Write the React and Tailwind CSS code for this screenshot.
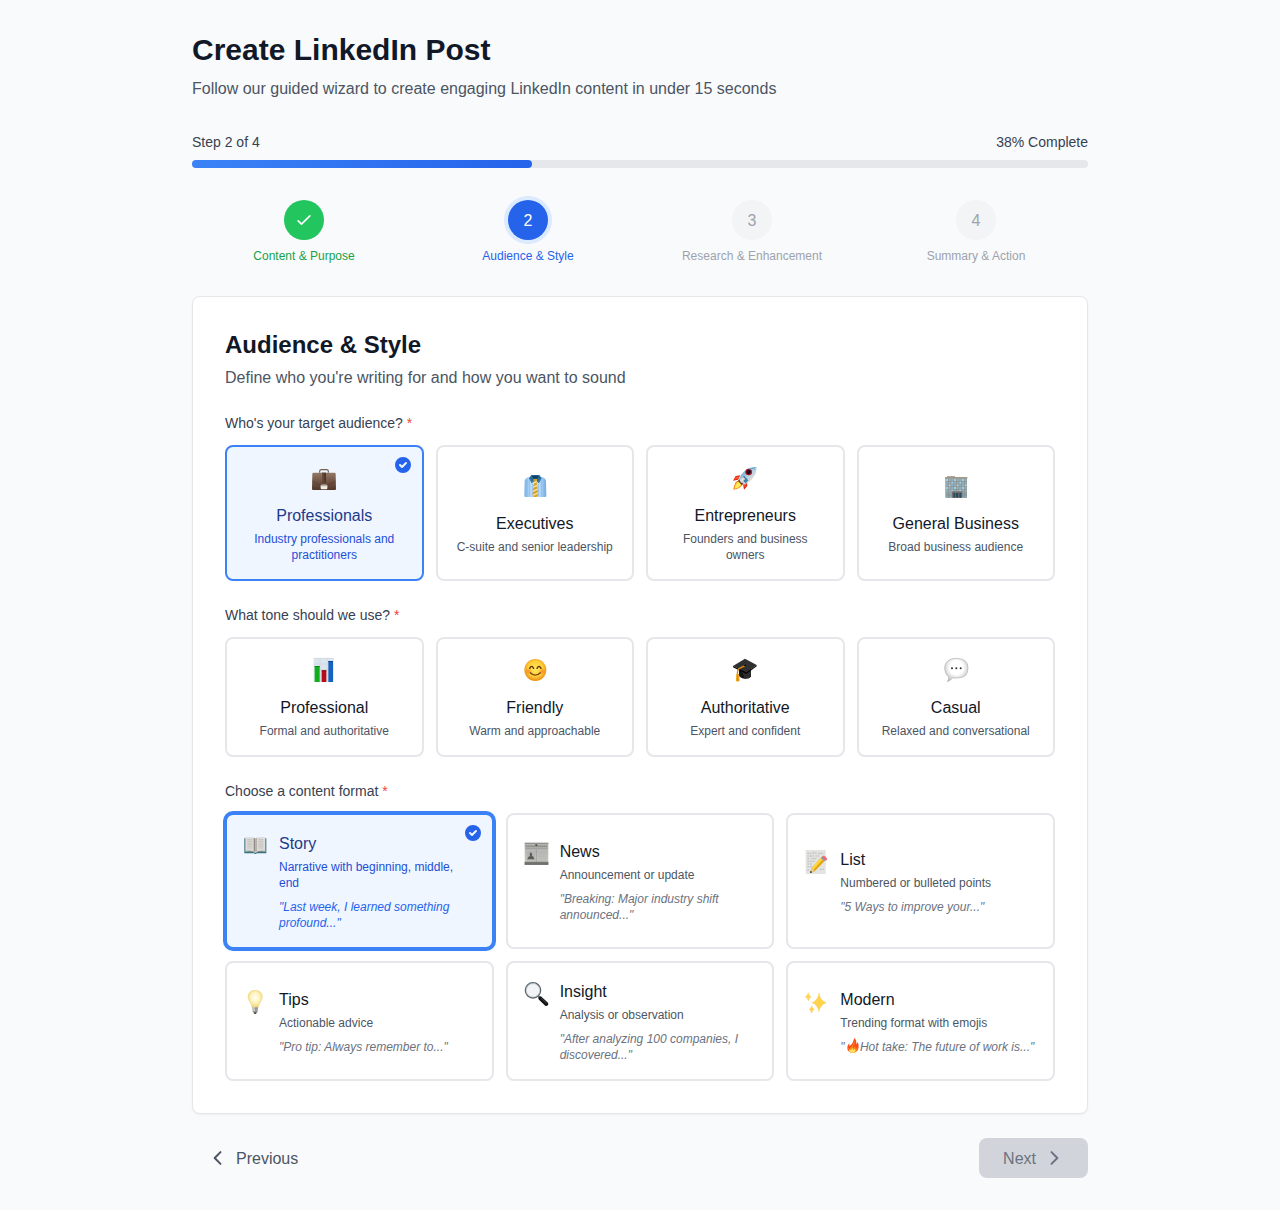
import React from 'react';

function Glyph({ children }) {
  return (
    <svg viewBox="0 0 72 72" className="block h-6 w-6 overflow-visible" aria-hidden="true">
      {children}
    </svg>
  );
}

const Briefcase = () => (
  <Glyph>
    <defs>
      <linearGradient id="bc" x1="0" y1="0" x2="0" y2="1">
        <stop offset="0" stopColor="#94796a" />
        <stop offset=".45" stopColor="#755847" />
        <stop offset="1" stopColor="#523629" />
      </linearGradient>
    </defs>
    <path d="M23 20v-4q0-5 5-5h16q5 0 5 5v4" fill="none" stroke="#75604f" strokeWidth="3.500" />
    <path d="M4 20h64q3 0 3 4l1 45q0 3-3 3H3q-3 0-3-3l1-45q0-4 3-4Z" fill="url(#bc)" />
    <path d="M1 45q17 11 27 12h16q13-2 27-12" fill="none" stroke="#4a3226" strokeWidth="1.500" />
    <path d="M30 20h12v30H30z" fill="#533729" />
    <path d="M31 20h4v28h-4z" fill="#735546" />
    <rect x="26" y="56" width="20" height="14" rx="3" fill="#f1efeb" />
    <path d="M26 61h20v-2q0-3-3-3H29q-3 0-3 3Z" fill="#b8afa4" />
  </Glyph>
);

const Necktie = () => (
  <Glyph>
    <defs>
      <linearGradient id="sh" x1="0" y1="0" x2="1" y2="0">
        <stop offset="0" stopColor="#78b2e4" />
        <stop offset=".3" stopColor="#bddfff" />
        <stop offset=".7" stopColor="#bddfff" />
        <stop offset="1" stopColor="#6eaae0" />
      </linearGradient>
      <clipPath id="tieclip"><path d="M31 14h12l-2 9 5 40-5 6h-8l-5-6 5-40Z" /></clipPath>
    </defs>
    <path d="M21 8Q8 10 5 20L4 66q0 3 4 3h58q4 0 4-3l-1-46Q66 10 53 8Z" fill="url(#sh)" />
    <path d="M12 18v50M20 17v51M28 30v38M47 30v38M55 17v51M63 18v50" stroke="#7fb3e2" strokeWidth="2" />
    <path d="M25 3h24l7 10-8 15-11-9-11 9-8-15Z" fill="#276d9b" />
    <path d="M27 5h20l-4 9H31Z" fill="#123d60" />
    <path d="m20 14 7 10 8-7M54 14l-7 10-8-7" fill="none" stroke="#4b8fbc" strokeWidth="2" />
    <g clipPath="url(#tieclip)">
      <path d="M25 12h24v60H25z" fill="#d9a126" />
      <path d="m23 31 26-12M23 43l26-12M23 55l26-12M23 67l26-12M23 79l26-12" stroke="#f8e4a2" strokeWidth="4" />
    </g>
  </Glyph>
);

const Rocket = () => (
  <Glyph>
    <defs>
      <linearGradient id="rk" x1="0" y1="0" x2="1" y2="1">
        <stop offset="0" stopColor="#347eb4" />
        <stop offset=".45" stopColor="#a9cce2" />
        <stop offset=".7" stopColor="#dcdcd6" />
        <stop offset="1" stopColor="#55656c" />
      </linearGradient>
    </defs>
    <path d="m22 28-14 2L0 44l15-3ZM42 48l1 12-10 11-3-17Z" fill="#d8220f" />
    <path d="m18 31-9 1-6 9 13-3ZM39 52l1 7-5 6-2-11Z" fill="#ff5227" />
    <path d="M12 45Q4 51 1 71q21-1 28-16L20 44Z" fill="#f47b0b" />
    <path d="M12 49Q7 55 4 68q15-2 21-12l-7-9Z" fill="#ffe958" />
    <path d="M71 3Q48 2 34 16 23 25 17 42l14 14q20-7 29-21Q71 23 71 3Z" fill="url(#rk)" />
    <path d="m18 40 13 14-5 3-11-12Z" fill="#743229" />
    <circle cx="47" cy="18" r="10" fill="#a51622" />
    <circle cx="47" cy="18" r="6.500" fill="#170f24" />
    <path d="m33 29 13 14-8 9-13-13Z" fill="#3f7ba7" />
    <path d="m20 42 10-9 7 6-13 12Z" fill="#dfdfda" />
    <path d="m60 6 6 5M67 5Q56 6 50 10" stroke="#6fb1da" strokeWidth="3" />
  </Glyph>
);

const Office = () => (
  <Glyph>
    <path d="M9 6h24v5H9z" fill="#b0a798" />
    <path d="M3 9h67v5H3z" fill="#a1988c" />
    <path d="M4 13h65v58H4z" fill="#8b938f" />
    {[15, 23, 31, 39, 47].map((y) =>
      [6, 14, 22, 30, 38, 46, 54, 62].map((x) => (
        <rect key={`${x}-${y}`} x={x} y={y} width="6" height="6" fill={(x + y) % 3 ? '#8fb3c6' : '#accbd7'} />
      ))
    )}
    <path d="M6 55h17v16H6zM55 55h13v16H55z" fill="#8aa7b3" />
    <path d="M24 52h31v19H24z" fill="#77706a" />
    <path d="M28 57h6v14h-6zM36 57h7v14h-7zM46 57h6v14h-6z" fill="#2b4d63" />
    <path d="M6 63h17M55 63h13M14 55v16M61 55v16" stroke="#858d89" strokeWidth="2" />
  </Glyph>
);

const BarChart = () => (
  <Glyph>
    <path d="M5 0h60v72H5z" fill="#dce5ee" />
    <path d="M5 1h60M5 18h60M5 35h60M5 52h60M24 0v72M46 0v72" stroke="#cbd7e2" strokeWidth="2" />
    <path d="M8 24h15v48H8z" fill="#10ae18" />
    <path d="M29 37h14v35H29z" fill="#b70c17" />
    <path d="M49 9h14v63H49z" fill="#1762bf" />
    <path d="M8 24h15v3H8z" fill="#078710" />
    <path d="M29 37h14v3H29z" fill="#840914" />
    <path d="M49 9h14v3H49z" fill="#0f4590" />
  </Glyph>
);

const Smile = () => (
  <Glyph>
    <defs>
      <radialGradient id="sm" cx=".5" cy=".45" r=".53">
        <stop offset="0" stopColor="#ffe65b" />
        <stop offset=".65" stopColor="#ffcf3a" />
        <stop offset="1" stopColor="#ec9017" />
      </radialGradient>
      <radialGradient id="ch">
        <stop offset="0" stopColor="#f56d22" stopOpacity=".65" />
        <stop offset="1" stopColor="#f56d22" stopOpacity="0" />
      </radialGradient>
    </defs>
    <circle cx="37" cy="36" r="33" fill="url(#sm)" />
    <circle cx="16" cy="40" r="11" fill="url(#ch)" />
    <circle cx="58" cy="40" r="11" fill="url(#ch)" />
    <path d="M20 31q6-12 12 0M42 31q6-12 12 0" fill="none" stroke="#5c3509" strokeWidth="4" strokeLinecap="round" />
    <path d="M22 44q15 15 30 0" fill="none" stroke="#79440c" strokeWidth="4" strokeLinecap="round" />
  </Glyph>
);

const GradCap = () => (
  <Glyph>
    <path d="m18 32 36 7v17q-5 6-18 6-13-1-18-9Z" fill="#151515" />
    <path d="M26 40q17-1 28-7v23q-5 6-18 6Z" fill="#2c2c2c" />
    <path d="m36 2 35 19-31 22L0 24Z" fill="#303030" />
    <path d="m0 24 40 19 31-22v4L40 48 0 28Z" fill="#080808" />
    <path d="M36 23 18 32q-5 4-5 18" fill="none" stroke="#da8a0b" strokeWidth="4" />
    <path d="M10 48h8l2 20-5 3-6-2Z" fill="#efa216" />
    <path d="m13 52 1 17" stroke="#a85c08" strokeWidth="1" />
    <ellipse cx="36" cy="22" rx="4" ry="2" fill="#090909" />
  </Glyph>
);

const Bubble = () => (
  <Glyph>
    <defs>
      <radialGradient id="bb" cx=".5" cy=".4" r=".6">
        <stop offset=".5" stopColor="#fff" />
        <stop offset="1" stopColor="#bdbdbd" />
      </radialGradient>
    </defs>
    <path d="M37 1Q54 1 64 9q8 7 8 21 0 15-8 23-8 6-23 7H26q-6 7-16 11 5-7 4-14Q2 48 2 30 2 15 12 8 22 1 37 1Z" fill="url(#bb)" stroke="#b2b2b2" strokeWidth="2" />
    <g fill="#303030"><circle cx="24" cy="31" r="3" /><circle cx="37" cy="31" r="3" /><circle cx="50" cy="31" r="3" /></g>
  </Glyph>
);

const Book = () => (
  <Glyph>
    <path d="M4 13h66v45H42q-2 2-5 2t-5-2H4Z" fill="#36717f" />
    <path d="M7 10q20-3 28 2h4q8-5 28-2v43q-20-3-28 3h-4q-8-6-28-3Z" fill="#dedcd8" />
    <path d="M32 11q5 1 5 4v40q-2-3-5-3Z" fill="#8f8c88" />
    <path d="M42 11q-5 1-5 4v40q2-3 5-3Z" fill="#b3b0ac" />
    <path d="M13 17h15M13 22h15M13 27h15M13 32h15M13 37h15M13 42h15M46 17h15M46 22h15M46 27h15M46 32h15M46 37h15M46 42h15" stroke="#bab7b4" strokeWidth="2" />
    <path d="M6 52q20-3 28 3M68 52q-20-3-28 3" fill="none" stroke="#8e8c88" strokeWidth="2" />
  </Glyph>
);

const Newspaper = () => (
  <Glyph>
    <defs>
      <linearGradient id="np" x1="0" y1="0" x2="0" y2="1">
        <stop offset="0" stopColor="#b0b0ae" />
        <stop offset=".8" stopColor="#c6c6c3" />
        <stop offset="1" stopColor="#747471" />
      </linearGradient>
    </defs>
    <path d="M2 3h71v65H2z" fill="url(#np)" />
    <path d="M2 2h71v3H2z" fill="#858582" />
    <path d="M5 13h65" stroke="#8b8b88" strokeWidth="5" strokeDasharray="5 1" />
    <path d="M5 20h65M37 23v37" stroke="#90908d" strokeWidth="2" />
    <path d="M34 7h6v5h-6z" fill="#4b4b49" />
    <path d="M8 27h25v28H8z" fill="#b3b3b0" />
    <path d="M10 52q2-9 8-10-3-8 2-11 6 2 4 10 6 2 7 11Z" fill="#5c5c58" />
    <path d="M41 29h28M41 34h28M41 39h28M41 44h28M41 49h28M41 54h28" stroke="#b0b0ad" strokeWidth="2" />
    <path d="M2 60h71v2H2zM2 64h71v4H2z" fill="#686864" />
  </Glyph>
);

const Memo = () => (
  <Glyph>
    <path d="M5 0h60v72H5z" fill="#e3e3e2" />
    <path d="M10 10h11M24 9h14M42 10h14M10 18h20M34 18h12M10 26h9M23 26h16M10 34h24M10 42h15M10 50h18M10 60h8M48 58h12" stroke="#a7a7a6" strokeWidth="2" strokeDasharray="6 2" />
    <path d="m18 69 5-15 27-30 11 10-29 30Z" fill="#e5a60d" />
    <path d="m23 54 27-30 5 5-27 31Z" fill="#ffd43c" />
    <path d="m50 24 6-5 11 9-6 6Z" fill="#8b999a" />
    <path d="m54 20 4-3q6-1 11 8v4l-4 3Z" fill="#ef6b78" />
    <path d="m18 69 5-15q5 1 9 10Z" fill="#e9c98c" />
    <path d="m18 69 2-7 5 5Z" fill="#282828" />
  </Glyph>
);

const Bulb = () => (
  <Glyph>
    <defs>
      <radialGradient id="bl" cx=".5" cy=".43" r=".6">
        <stop offset="0" stopColor="#fffef4" />
        <stop offset=".5" stopColor="#fff4c0" />
        <stop offset="1" stopColor="#efcf6c" />
      </radialGradient>
    </defs>
    <path d="M36.500 1Q50 1 56 11q5 11-2 22-7 9-8 19H27q-1-10-8-19-7-11-2-22Q23 1 36.500 1Z" fill="url(#bl)" stroke="#f0d98b" strokeWidth="2" />
    <path d="M28 51h17l-1 14-5 6h-5l-5-6Z" fill="#b1b0aa" />
    <path d="M29 55h15M29 60h15M30 65h13" stroke="#7d7c76" strokeWidth="2" />
    <path d="M32 67h9l-2 5h-5Z" fill="#4d4d4d" />
    <path d="M31 51h4v13h-4z" fill="#d9d8d1" />
  </Glyph>
);

const Magnifier = () => (
  <Glyph>
    <path d="m43 43 8 7" stroke="#747a7d" strokeWidth="6" />
    <path d="m49 49 18 17" stroke="#151515" strokeWidth="12" strokeLinecap="round" />
    <path d="m51 48 17 16" stroke="#555" strokeWidth="2" />
    <circle cx="27" cy="25" r="23" fill="#f1f3f4" stroke="#596267" strokeWidth="4" />
    <circle cx="27" cy="25" r="20" fill="none" stroke="#c0c6c8" strokeWidth="2" />
    <path d="M6 21Q10 4 27 3" fill="none" stroke="#80a2b1" strokeWidth="2" />
  </Glyph>
);

const Sparkles = () => (
  <Glyph>
    <g fill="#ffd34c" stroke="#fbc765" strokeWidth="1">
      <path d="M45 9q3 23 22 29-19 6-22 28-4-22-21-28 17-6 21-29Z" />
      <path d="M13 8q2 11 9 12-7 3-9 13-3-10-9-13 6-2 9-12Z" />
      <path d="M23 47q2 9 8 11-6 3-8 12-2-9-8-12 6-2 8-11Z" />
    </g>
  </Glyph>
);

function Fire() {
  return (
    <span className="relative inline-block h-3 w-3 align-baseline">
      <svg viewBox="0 0 36 45" className="absolute -top-px left-0.5 h-[15px] w-3 max-w-none" aria-hidden="true">
        <path d="M22 0q8 8 5 18 4-1 4-6 5 6 4 14-1 16-17 19Q0 44 1 28q1-7 6-12v9q9-6 11-14 2-5 4-11Z" fill="#fa4d19" />
        <path d="M22 7q2 7-2 14-4 6-3 11 4-2 6-7 3 4 3 8 4-2 5-6 1 14-13 17Q5 44 4 30q5 3 8-2 7-6 10-21Z" fill="#ff871e" />
        <path d="M17 28q2 5 0 8 4 0 6-4 6 7-2 12H12q-9-4-5-10 3 3 6 1 3-2 4-7Z" fill="#ffe35d" />
      </svg>
    </span>
  );
}

function CheckBadge() {
  return (
    <svg viewBox="0 0 20 20" fill="#2563eb" className="absolute top-2 right-[8.5px] h-5 w-5" aria-hidden="true">
      <path
        fillRule="evenodd"
        clipRule="evenodd"
        d="M10 18a8 8 0 100-16 8 8 0 000 16zm3.707-9.293a1 1 0 00-1.414-1.414L9 10.586 7.707 9.293a1 1 0 00-1.414 1.414l2 2a1 1 0 001.414 0l4-4z"
      />
    </svg>
  );
}

function Stroke({ d, className, width = 2 }) {
  return (
    <svg viewBox="0 0 24 24" fill="none" stroke="currentColor" strokeWidth={width} strokeLinecap="round" strokeLinejoin="round" className={className} aria-hidden="true">
      <path d={d} />
    </svg>
  );
}

const steps = [
  { label: 'Content & Purpose', circle: 'bg-[#22c55e] text-white', text: 'text-[#16a34a]', done: true },
  { label: 'Audience & Style', circle: 'bg-[#2563eb] text-white ring-4 ring-[#dbeafe]', text: 'text-[#2563eb]' },
  { label: 'Research & Enhancement', circle: 'bg-[#f3f4f6] text-[#9ca3af]', text: 'text-[#9ca3af]' },
  { label: 'Summary & Action', circle: 'bg-[#f3f4f6] text-[#9ca3af]', text: 'text-[#9ca3af]' },
];

const audiences = [
  { icon: Briefcase, title: 'Professionals', desc: 'Industry professionals and practitioners', selected: true },
  { icon: Necktie, title: 'Executives', desc: 'C-suite and senior leadership' },
  { icon: Rocket, title: 'Entrepreneurs', desc: 'Founders and business owners' },
  { icon: Office, title: 'General Business', desc: 'Broad business audience' },
];

const tones = [
  { icon: BarChart, title: 'Professional', desc: 'Formal and authoritative' },
  { icon: Smile, title: 'Friendly', desc: 'Warm and approachable' },
  { icon: GradCap, title: 'Authoritative', desc: 'Expert and confident' },
  { icon: Bubble, title: 'Casual', desc: 'Relaxed and conversational' },
];

const formats = [
  { icon: Book, title: 'Story', desc: 'Narrative with beginning, middle, end', example: '"Last week, I learned something profound..."', selected: true },
  { icon: Newspaper, title: 'News', desc: 'Announcement or update', example: '"Breaking: Major industry shift announced..."' },
  { icon: Memo, title: 'List', desc: 'Numbered or bulleted points', example: '"5 Ways to improve your..."' },
  { icon: Bulb, title: 'Tips', desc: 'Actionable advice', example: '"Pro tip: Always remember to..."' },
  { icon: Magnifier, title: 'Insight', desc: 'Analysis or observation', example: '"After analyzing 100 companies, I discovered..."' },
  { icon: Sparkles, title: 'Modern', desc: 'Trending format with emojis', example: <>"<Fire /> Hot take: The future of work is..."</> },
];

function FieldLabel({ children }) {
  return (
    <div className="mb-3 text-sm text-[#374151]">
      {children} <span className="text-[#ef4444]">*</span>
    </div>
  );
}

function OptionCard({ icon: Icon, title, desc, selected }) {
  return (
    <button
      className={`relative flex flex-col items-center justify-center rounded-lg border-2 p-4 text-center ${
        selected ? 'border-[#3b82f6] bg-[#eff6ff]' : 'border-[#e5e7eb] bg-white'
      }`}
    >
      {selected && <CheckBadge />}
      <div className="mb-2 h-8 pt-[3px]"><Icon /></div>
      <div className={`mb-1 pt-0.5 text-base/[22px] ${selected ? 'text-[#1e3a8a]' : 'text-[#111827]'}`}>{title}</div>
      <div className={`text-xs ${selected ? 'text-[#1d4ed8]' : 'text-[#4b5563]'}`}>{desc}</div>
    </button>
  );
}

function FormatCard({ icon: Icon, title, desc, example, selected }) {
  return (
    <button
      className={`relative flex flex-col justify-center rounded-lg border-2 p-4 text-left ${
        selected
          ? 'border-[#3b82f6] bg-[#eff6ff] shadow-sm ring-2 ring-[#3b82f6]'
          : 'border-[#e5e7eb] bg-white'
      }`}
    >
      {selected && <CheckBadge />}
      <div className="flex items-start gap-3">
        <div className="h-8 shrink-0 pt-[3px]"><Icon /></div>
        <div className="min-w-0 flex-1">
          <div className={`mb-1 pt-0.5 text-base/[22px] ${selected ? 'text-[#1e3a8a]' : 'text-[#111827]'}`}>{title}</div>
          <div className={`mb-2 text-xs ${selected ? 'text-[#1d4ed8]' : 'text-[#4b5563]'}`}>{desc}</div>
          <div className={`text-xs italic ${selected ? 'text-[#2563eb]' : 'text-[#6b7280]'}`}>{example}</div>
        </div>
      </div>
    </button>
  );
}

export default function App() {
  return (
    <div className="min-h-screen bg-[#f9fafb] py-8 font-['Liberation_Sans',Arial,sans-serif]">
      <main className="mx-auto max-w-4xl">
        <header className="mb-8">
          <h1 className="mb-2 text-3xl font-bold text-[#111827]">Create LinkedIn Post</h1>
          <p className="pt-0.5 text-base/[22px] text-[#4b5563]">
            Follow our guided wizard to create engaging LinkedIn content in under 15 seconds
          </p>
        </header>

        <div className="mb-8">
          <div className="mb-2 flex justify-between text-sm text-[#374151]">
            <span>Step 2 of 4</span>
            <span>38% Complete</span>
          </div>
          <div className="h-2 rounded-full bg-[#e5e7eb]">
            <div className="h-2 w-[38%] rounded-full bg-linear-to-r/srgb from-[#3b82f6] to-[#2563eb]" />
          </div>
        </div>

        <div className="mb-8 grid grid-cols-4">
          {steps.map((step, i) => (
            <div key={step.label} className="flex flex-col items-center">
              <div className={`mb-2 flex h-10 w-10 items-center justify-center rounded-full ${step.circle}`}>
                {step.done ? (
                  <Stroke d="M5 13l4 4L19 7" className="h-5 w-5" />
                ) : (
                  <span className="pt-0.5 text-base/[22px]">{i + 1}</span>
                )}
              </div>
              <div className={`text-xs ${step.text}`}>{step.label}</div>
            </div>
          ))}
        </div>

        <section className="mb-6 rounded-lg border border-[#e5e7eb] bg-white p-8 shadow-[0_1px_2px_0_rgb(0_0_0/0.05)]">
          <h2 className="mb-1 text-2xl font-bold text-[#111827]">Audience &amp; Style</h2>
          <p className="mb-6 pt-0.5 text-base/[22px] text-[#4b5563]">Define who you're writing for and how you want to sound</p>

          <FieldLabel>Who's your target audience?</FieldLabel>
          <div className="mb-6 grid grid-cols-4 gap-3">
            {audiences.map((a) => <OptionCard key={a.title} {...a} />)}
          </div>

          <FieldLabel>What tone should we use?</FieldLabel>
          <div className="mb-6 grid grid-cols-4 gap-3">
            {tones.map((t) => <OptionCard key={t.title} {...t} />)}
          </div>

          <FieldLabel>Choose a content format</FieldLabel>
          <div className="grid grid-cols-3 gap-3">
            {formats.map((f) => <FormatCard key={f.title} {...f} />)}
          </div>
        </section>

        <footer className="flex items-center justify-between">
          <button className="flex items-center gap-2 rounded-lg px-4 py-2 text-[#4b5563]">
            <Stroke d="M15 19l-7-7 7-7" width={2.4} className="h-5 w-5" />
            <span className="pt-0.5 text-base/[22px]">Previous</span>
          </button>
          <button className="flex items-center gap-2 rounded-lg bg-[#d1d5db] px-6 py-2 text-[#6b7280]">
            <span className="pt-0.5 text-base/[22px]">Next</span>
            <Stroke d="M9 5l7 7-7 7" width={2.4} className="h-5 w-5" />
          </button>
        </footer>
      </main>
    </div>
  );
}
